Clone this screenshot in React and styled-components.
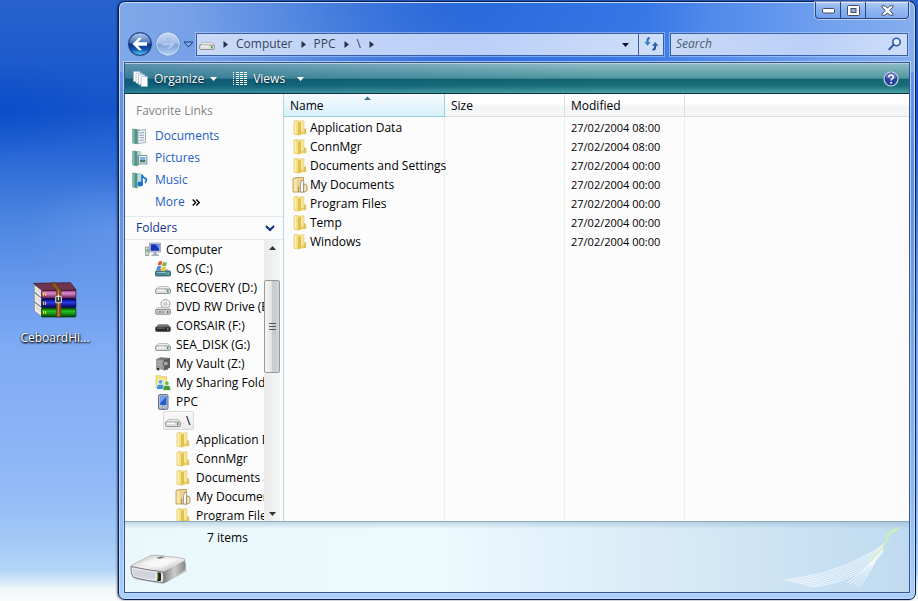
import React from 'react';
import styled, { createGlobalStyle } from 'styled-components';

const GlobalStyle = createGlobalStyle`
  * {
    box-sizing: border-box;
  }
  body {
    margin: 0;
    font-family: 'Open Sans', 'Noto Sans', sans-serif;
    font-size: 12px;
    line-height: 18px;
    color: #000;
  }
  button,
  input {
    font: inherit;
    color: inherit;
    padding: 0;
    border: none;
    background: none;
  }
  a {
    color: inherit;
    text-decoration: none;
  }
  svg {
    display: block;
    flex: none;
  }
`;

/* ---------- desktop ---------- */

const Desktop = styled.div`
  display: flex;
  height: 100vh;
  min-height: 400px;
  padding: 1px 2px 1px 0;
  overflow: hidden;
  background:
    radial-gradient(ellipse 90px 60px at 112px 235px, rgba(120, 165, 240, 0.4), transparent),
    radial-gradient(ellipse 120px 50px at 0 110px, rgba(0, 70, 200, 0.5), transparent),
    linear-gradient(#2863cd 0%, #1f5dcc 8%, #1555cc 18%, #2a69d6 26%, #4a83e0 36%, #6597ea 46%, #7eabf4 58%, #8ab3f7 72%, #93bbf6 82%, #a3c9f6 90%, #b4d6f7 95%, #f0f7fa 98%, #fafcfb 100%);
`;

const IconArea = styled.aside`
  flex: 0 0 118px;
  display: flex;
  align-items: center;
  justify-content: center;
  padding: 28px 8px 0 0;
`;

const Shortcut = styled.button`
  display: flex;
  flex-direction: column;
  align-items: center;
  gap: 11px;
  color: #fff;
  text-shadow: 1px 1px 2px #000, 0 1px 2px #000;
`;

/* ---------- window frame ---------- */

const Window = styled.main`
  flex: 1;
  min-width: 0;
  display: flex;
  flex-direction: column;
  padding: 0 5px 6px;
  border: 1px solid #0b1d4a;
  border-radius: 7px;
  box-shadow: inset 0 0 0 1px #c4dcfb, -1px 0 2px rgba(0, 10, 60, 0.6);
  background:
    radial-gradient(ellipse 260px 90px at 330px 10px, rgba(33, 98, 212, 0.7), transparent),
    linear-gradient(90deg, #80a8ea 0%, #6b98e5 20%, #3a77e4 45%, #3a7bea 65%, #6f9fee 88%, #86aeee 100%) top / 100% 70px no-repeat,
    linear-gradient(#6c9be8, #5f8fe3 30%, #8ab6f4 80%, #a9cff9);
`;

const CaptionButtons = styled.div`
  align-self: flex-end;
  display: flex;
  height: 17px;
  margin: 0 1px 13px 0;
  border: 1px solid #2b437e;
  border-top: none;
  border-radius: 0 0 4px 4px;
  box-shadow: 0 0 0 1px rgba(255, 255, 255, 0.5);
`;

const CaptionButton = styled.button`
  display: grid;
  place-items: center;
  width: ${(props) => (props.$wide ? '42px' : '25px')};
  border-right: ${(props) => (props.$wide ? 'none' : '1px solid #2b437e')};
  background: linear-gradient(rgba(255, 255, 255, 0.4), rgba(255, 255, 255, 0.15) 50%, transparent);
`;

const NavBar = styled.nav`
  display: flex;
  align-items: center;
  height: 24px;
  margin: 0 2px 6px 3px;
`;

const NavButtons = styled.div`
  display: flex;
  align-items: center;
  gap: 2px;
  margin-right: 2px;
`;

const NavButton = styled.button`
  display: grid;
  place-items: center;
`;

const Field = styled.div`
  display: flex;
  align-items: center;
  min-width: 0;
  height: 23px;
  border: 1px solid #3b5fa5;
  box-shadow: 0 0 0 1px rgba(190, 215, 255, 0.5);
  background: linear-gradient(90deg, #c9d9f6, #bad0f8 60%, #cedef9);
`;

const AddressBar = styled(Field)`
  flex: 1;
  padding-left: 2px;
  margin-right: 6px;
  color: #36415a;
`;

const Crumbs = styled.div`
  flex: 1;
  min-width: 0;
  display: flex;
  align-items: center;
  gap: 7px;
`;

const AddressButton = styled.button`
  display: grid;
  place-items: center;
  width: 25px;
  height: 21px;
  border-left: ${(props) => (props.$divided ? '1px solid #3b5fa5' : 'none')};
`;

const SearchBox = styled(Field)`
  flex: 0 1 238px;
  padding: 0 5px;
`;

const SearchInput = styled.input`
  flex: 1;
  min-width: 0;
  outline: none;

  &::placeholder {
    color: #4c5c78;
    font-style: italic;
    opacity: 1;
  }
`;

/* ---------- client area ---------- */

const Client = styled.div`
  flex: 1;
  min-height: 0;
  display: flex;
  flex-direction: column;
  border: 1px solid #38548a;
  box-shadow: 0 0 0 1px rgba(200, 222, 252, 0.7);
  background: #fcfcfc;
`;

const CommandBar = styled.div`
  display: flex;
  align-items: center;
  flex: none;
  height: 31px;
  padding: 0 10px 0 8px;
  color: #fff;
  text-shadow: 0 1px 2px #012;
  border-top: 1px solid #b5d4df;
  border-bottom: 1px solid #0b3146;
  background:
    linear-gradient(90deg, rgba(0, 70, 130, 0.35), transparent 60%),
    linear-gradient(#8ebac4 0%, #4f97a0 49%, #14646e 52%, #186f78 75%, #4aa2a2 100%);
`;

const Command = styled.button`
  display: flex;
  align-items: center;
  gap: 6px;
  margin-right: ${(props) => (props.$split ? '12px' : '16px')};
  text-shadow: inherit;
`;

const HelpButton = styled.button`
  margin-left: auto;
`;

const Panes = styled.div`
  flex: 1;
  min-height: 0;
  display: flex;
`;

const Sidebar = styled.aside`
  flex: 0 0 159px;
  min-width: 0;
  display: flex;
  flex-direction: column;
  border-right: 1px solid #b5d8e8;
`;

const Favorites = styled.section`
  padding: 8px 7px 3px;
`;

const FavoritesTitle = styled.h2`
  margin: 0 0 5px 4px;
  font-size: 12px;
  font-weight: 400;
  color: #868686;
`;

const FavoriteLink = styled.a`
  display: flex;
  align-items: center;
  height: 22px;
  gap: 7px;
  padding-left: ${(props) => (props.$plain ? '23px' : '0')};
  color: #1f5cc4;
`;

const FoldersToggle = styled.button`
  display: flex;
  align-items: center;
  justify-content: space-between;
  flex: none;
  height: 24px;
  padding: 0 8px 0 11px;
  border-top: 1px solid #e2e8ee;
  border-bottom: 1px solid #e2e8ee;
  color: #15328b;
`;

const TreeArea = styled.div`
  flex: 1;
  min-height: 0;
  display: flex;
  padding-right: 3px;
`;

const Tree = styled.ul`
  flex: 1;
  min-width: 0;
  margin: 0;
  padding: 0;
  overflow: hidden;
  list-style: none;
`;

const TreeItem = styled.li`
  display: flex;
  height: 19px;
  padding-left: ${(props) => props.$level * 10 + 20}px;
`;

const TreeButton = styled.button`
  flex: none;
  display: flex;
  align-items: center;
  gap: 5px;
  margin-left: ${(props) => (props.$selected ? '-2px' : '0')};
  padding: ${(props) => (props.$selected ? '0 3px 0 1px' : '0')};
  border: ${(props) => (props.$selected ? '1px solid #d9d9d9' : 'none')};
  border-radius: 2px;
  background: ${(props) => (props.$selected ? 'linear-gradient(#fafafa, #eaeaea)' : 'none')};
  white-space: nowrap;
`;

const ScrollBar = styled.div`
  flex: 0 0 16px;
  display: flex;
  flex-direction: column;
  background: linear-gradient(90deg, #eaeaea, #f6f6f6);
`;

const ScrollButton = styled.button`
  display: grid;
  place-items: center;
  height: 16px;
`;

const ScrollTrack = styled.div`
  flex: 1;
  display: flex;
  flex-direction: column;

  &::before {
    content: '';
    flex: 24;
  }
  &::after {
    content: '';
    flex: 134;
  }
`;

const ScrollThumb = styled.div`
  flex: 93;
  display: grid;
  place-items: center;
  border: 1px solid #979797;
  border-radius: 2px;
  background: linear-gradient(90deg, #f5f5f5, #e6e6e6 45%, #c8c8ca 55%, #d4d4d6);
`;

const FileList = styled.div`
  flex: 1;
  min-width: 0;
  overflow: hidden;
`;

const FileTable = styled.table`
  width: 100%;
  height: 100%;
  table-layout: fixed;
  border-collapse: separate;
  border-spacing: 0;
`;

const HeadCell = styled.th`
  width: ${(props) => props.$width};
  height: 23px;
  padding: 1px 6px 0;
  text-align: left;
  font-weight: 400;
  border-right: ${(props) => (props.$last ? 'none' : '1px solid')};
  border-bottom: 1px solid;
  border-color: ${(props) => (props.$sorted ? '#96d2ea' : '#dcdddf')};
  background: ${(props) =>
    props.$sorted
      ? 'linear-gradient(#f5fbfe 0%, #e9f7fd 45%, #d8f0fa 100%)'
      : 'linear-gradient(#ffffff 40%, #f3f4f5 60%, #f5f6f7)'};
`;

const HeadLabel = styled.button`
  position: relative;
  width: 100%;
  text-align: left;
`;

const SortMark = styled.svg`
  position: absolute;
  top: -1px;
  left: 50%;
`;

const Cell = styled.td`
  height: 19px;
  padding: 0 6px;
  white-space: nowrap;
  border-right: ${(props) => (props.$last ? 'none' : '1px solid #eff1f3')};
`;

const DateCell = styled(Cell)`
  font-size: 11px;
`;

const SpacerRow = styled.tr`
  height: 1px;

  td {
    height: 1px;
  }
`;

const FillerRow = styled.tr`
  height: 100%;
`;

const FileName = styled.div`
  display: flex;
  align-items: center;
  gap: 2px;
  margin: 0 -6px 0 2px;
`;

const DetailsPane = styled.footer`
  position: relative;
  flex: none;
  display: flex;
  align-items: flex-start;
  gap: 18px;
  height: 71px;
  padding: 7px 4px;
  border-top: 1px solid #8fabc0;
  background:
    linear-gradient(rgba(140, 175, 200, 0.45), transparent 7px),
    linear-gradient(90deg, #eaf8fc 0%, #edfafe 40%, #d9ebf7 68%, #bfdaf0 100%);
`;

const DriveArt = styled.div`
  align-self: flex-end;
`;

const Swoosh = styled.svg`
  position: absolute;
  right: 4px;
  bottom: 1px;
`;

/* ---------- icons ---------- */

const FolderIcon = () => (
  <svg width="16" height="16" viewBox="0 0 16 16">
    <path d="M2 1l4-.6 1 1.2V15l-5-.8z" fill="#f4e08a" stroke="#d9bb55" strokeWidth=".6" />
    <path d="M6.500 1.500l5.500.5v12l-5.500 1.200z" fill="#ecd061" />
    <path d="M8 .8h4V12H8z" fill="#f6e79d" stroke="#dbc063" strokeWidth=".5" />
    <path d="M6 3l3-1v12l-3 1.500z" fill="#e2c14b" />
    <path d="M12 8.500h2l.4 5L12 14.500z" fill="#dfc35c" />
    <path d="M3.200 1.500v12" stroke="#fff7c9" strokeWidth="1" />
  </svg>
);

const DocFolderIcon = () => (
  <svg width="16" height="16" viewBox="0 0 16 16">
    <path d="M1 1.500L5 .5h6.500V15H1z" fill="#ecd28a" stroke="#b6924b" strokeWidth=".8" />
    <path d="M1.800 2h3v12.300h-3z" fill="#f6e4ad" />
    <path d="M8.500 6.500L10 3l1.700 1.500V15H8.500z" fill="#fff" stroke="#8e8a80" strokeWidth=".8" />
    <path d="M11.700 7.500l1.800-.5 1.500 2v4.500L12.500 15h-1z" fill="#f0e4c0" stroke="#9a7f45" strokeWidth=".8" />
    <path d="M6.500 9.500V15" stroke="#b08e48" />
  </svg>
);

const DriveIcon = ({ dark }) => (
  <svg width="16" height="16" viewBox="0 0 16 16">
    <path d="M3.500 6.500h9.500l2.500 3H.7z" fill={dark ? '#777' : '#ececec'} stroke={dark ? '#888' : '#aaa'} strokeWidth=".7" />
    <rect x=".6" y="9" width="14.800" height="4.500" rx="1.200" fill={dark ? '#292929' : '#dedede'} stroke={dark ? '#555' : '#808080'} strokeWidth=".8" />
    <path d="M2 10.200h8" stroke={dark ? '#666' : '#fff'} strokeWidth="1.200" />
    <rect x="12" y="10" width="1.500" height="2.300" fill={dark ? '#777' : '#3d9a3c'} />
  </svg>
);

const OsDriveIcon = () => (
  <svg width="16" height="17" viewBox="0 0 16 17">
    <path d="M2 9h10l3.500 2.500H.5z" fill="#a9c0c4" />
    <rect x=".5" y="11" width="15" height="5" rx="1" fill="#4c8596" stroke="#2c5967" strokeWidth=".8" />
    <path d="M2 12.500h9" stroke="#8dc0cc" />
    <rect x="12.500" y="12.500" width="1.300" height="2" fill="#6bea6b" />
    <path d="M3.500 2q2-1.800 3.700-.5L6.400 5.200Q4.500 4.500 2.600 5.600z" fill="#e8582c" />
    <path d="M8 1.800q2 1.300 4 .2l-.9 3.900q-2 1-4-.2z" fill="#7cb843" />
    <path d="M2.400 6.400q2-1.200 3.800-.2l-.9 3.900q-2-1-3.900.2z" fill="#3f8ede" />
    <path d="M7 6.600q2 1.200 4 .2l-1 3.900q-2 1-3.900-.2z" fill="#f5c62e" />
  </svg>
);

const DvdIcon = () => (
  <svg width="16" height="16" viewBox="0 0 16 16">
    <circle cx="10.500" cy="5" r="4.500" fill="#ececec" stroke="#8f8f8f" strokeWidth=".8" />
    <path d="M10.500 5L8 1.500M10.500 5L14 3" stroke="#fff" />
    <circle cx="10.500" cy="5" r="1.300" fill="#fff" stroke="#888" strokeWidth=".7" />
    <path d="M3 8.500h10l2.500 2.500H.5z" fill="#e3e3e3" stroke="#999" strokeWidth=".5" />
    <rect x=".6" y="10.700" width="14.800" height="4.500" rx="1" fill="#d5d5d5" stroke="#707070" strokeWidth=".8" />
    <path d="M2.500 13h7" stroke="#777" />
    <rect x="12" y="12" width="1.500" height="2" fill="#3a7d3a" />
  </svg>
);

const VaultIcon = () => (
  <svg width="16" height="16" viewBox="0 0 16 16">
    <path d="M1 3l5-1.700L15 2v9.500l-5.500 3L1 11.500z" fill="#777" />
    <path d="M1 3l8 1.200V14.500L1 11.500z" fill="#9a9a9a" />
    <path d="M9 4.200L15 2v9.500l-6 3z" fill="#5c5c5c" />
    <circle cx="10.800" cy="7.500" r="2.500" fill="#a9a9a9" stroke="#444" strokeWidth=".8" />
    <path d="M2 5.500l5 .8M2 8.500l5 .9" stroke="#c0c0c0" strokeWidth=".8" />
    <path d="M2 12v1.500l2 .5v-1.500M12 14v-1" stroke="#333" />
  </svg>
);

const SharingIcon = () => (
  <svg width="16" height="16" viewBox="0 0 16 16">
    <path d="M1 .8h5l1 1h4.500V13H1z" fill="#f6e38a" stroke="#d8b94e" strokeWidth=".7" />
    <path d="M1.500 14.500q-.5-5.500 4-5.500t4 5.500z" fill="#3f8ed6" stroke="#fff" strokeWidth=".7" />
    <circle cx="5.500" cy="6.800" r="2.400" fill="#5ba4e4" stroke="#fff" strokeWidth=".7" />
    <path d="M8 15.500q-.5-5.500 3.800-5.500t3.800 5.500z" fill="#3f9c38" stroke="#fff" strokeWidth=".7" />
    <circle cx="11.800" cy="8.200" r="2.300" fill="#68b94e" stroke="#fff" strokeWidth=".7" />
  </svg>
);

const PhoneIcon = () => (
  <svg width="16" height="16" viewBox="0 0 16 16">
    <rect x="3.500" y=".6" width="9.500" height="14.800" rx="1.500" fill="#b4bfd2" stroke="#55617d" strokeWidth=".9" />
    <rect x="5.200" y="2.500" width="6.200" height="8.500" fill="#245dce" />
    <path d="M5.200 2.500h6.200L5.200 9z" fill="#79a7f0" />
    <circle cx="8.300" cy="13.200" r="1.100" fill="#eef2fa" stroke="#55617d" strokeWidth=".5" />
  </svg>
);

const ComputerIcon = () => (
  <svg width="16" height="16" viewBox="0 0 16 16">
    <rect x=".6" y="5" width="3.200" height="8.500" fill="#d6dbd8" stroke="#7c8a86" strokeWidth=".7" />
    <path d="M2.200 7v3" stroke="#3ba345" />
    <rect x="4.500" y="1" width="11" height="9" fill="#cdd5e8" stroke="#8c96ae" strokeWidth=".7" />
    <rect x="5.700" y="2.200" width="8.600" height="6.600" fill="#1733b4" />
    <path d="M10 2.200h4.300v5z" fill="#5d8bf1" />
    <path d="M8.500 10h3l.5 2.500H14V14H6.500v-1.500h1.700z" fill="#a4adba" />
  </svg>
);

const FavoriteIcon = ({ kind }) => (
  <svg width="16" height="17" viewBox="0 0 16 17">
    <path d="M.8 1l4.700.8v14L.8 15z" fill="#4f9487" stroke="#38756b" strokeWidth=".6" />
    <path d="M1.800 1.300v13.800" stroke="#9bd0c2" />
    <path d="M5.500 1.800L8 1v13l-2.500 1.800z" fill="#86bcae" />
    {kind === 'documents' && (
      <>
        <path d="M6 2.500L13.500 1.500v13L6 15.500z" fill="#eef4fa" stroke="#8899a9" strokeWidth=".8" />
        <path d="M7.500 5l4.500-.5M7.500 7.500l4.500-.5M7.500 10l4.500-.5M7.500 12.500l4.500-.5" stroke="#8296ae" strokeWidth=".9" />
      </>
    )}
    {kind === 'pictures' && (
      <>
        <path d="M5.500 2l4-.7v5h-4z" fill="#b9dacf" />
        <rect x="6.500" y="5.500" width="8.300" height="8.500" fill="#f4f8fb" stroke="#6f8895" strokeWidth=".9" />
        <path d="M7.800 7h5.700v3H7.800z" fill="#7db4dc" />
        <path d="M7.800 10h5.700v2.500H7.800z" fill="#477f70" />
      </>
    )}
    {kind === 'music' && (
      <>
        <path d="M5.500 2l4.500-.5v12l-4.500 2z" fill="#bddcd2" />
        <path d="M10 2.500v9M10 2.500q.5 3 4.500 4.500-.2 2.500-1.500 4" stroke="#1872cf" strokeWidth="1.600" fill="none" />
        <ellipse cx="8.300" cy="12" rx="2.800" ry="2.400" fill="#1872cf" />
      </>
    )}
  </svg>
);

const Triangle = ({ dir, color = '#000', size = 7 }) => (
  <svg width={size} height={size} viewBox="0 0 7 7">
    {dir === 'right' && <path d="M1.500 0L6 3.500 1.500 7z" fill={color} />}
    {dir === 'down' && <path d="M0 2h7L3.500 6z" fill={color} />}
    {dir === 'up' && <path d="M0 5h7L3.500 1z" fill={color} />}
  </svg>
);

const BackIcon = () => (
  <svg width="26" height="26" viewBox="0 0 26 26">
    <defs>
      <linearGradient id="back" x1="0" y1="0" x2="0" y2="1">
        <stop offset="0" stopColor="#b4cbee" />
        <stop offset=".46" stopColor="#4a74b8" />
        <stop offset=".5" stopColor="#0a2f80" />
        <stop offset=".75" stopColor="#1358b4" />
        <stop offset="1" stopColor="#5ce0f8" />
      </linearGradient>
    </defs>
    <circle cx="13" cy="13" r="12.300" fill="#466fb8" opacity=".7" />
    <circle cx="13" cy="13" r="11.300" fill="url(#back)" stroke="#1a3470" strokeWidth="1" />
    <path d="M5.500 13l6.500-6.200h3L11 11.200h9v3.600h-9l4 4.400h-3z" fill="#fff" />
  </svg>
);

const ForwardIcon = () => (
  <svg width="26" height="26" viewBox="0 0 26 26">
    <defs>
      <linearGradient id="forward" x1="0" y1="0" x2="0" y2="1">
        <stop offset="0" stopColor="#c6d8f3" />
        <stop offset=".48" stopColor="#a5bfe8" />
        <stop offset=".52" stopColor="#7d9fd8" />
        <stop offset="1" stopColor="#b7d2f6" />
      </linearGradient>
    </defs>
    <circle cx="13" cy="13" r="12.300" fill="#5c82c4" opacity=".7" />
    <circle cx="13" cy="13" r="11.300" fill="url(#forward)" stroke="#e0ecfc" strokeWidth=".8" />
    <path d="M20 13l-6-5.500h-2.500l3.500 4H7v3h8l-3.500 4H14z" fill="#b3caee" stroke="#8eacdc" strokeWidth=".6" />
  </svg>
);

const RefreshIcon = () => (
  <svg width="15" height="14" viewBox="0 0 15 14">
    <path d="M5.800 1Q3.500 1 3.500 4v2" fill="none" stroke="#2f6fb5" strokeWidth="2" />
    <path d="M.3 5h6.400L3.500 8.800z" fill="#3d82c9" />
    <path d="M8.500 12.800q2.700 0 2.700-3V8" fill="none" stroke="#244f96" strokeWidth="2" />
    <path d="M8 8.700h6.400L11.200 5z" fill="#2c61a8" />
  </svg>
);

const SearchIcon = () => (
  <svg width="14" height="14" viewBox="0 0 14 14">
    <circle cx="8.500" cy="5" r="3.700" fill="#e2eefe" stroke="#2d5ca8" strokeWidth="1.600" />
    <path d="M5.600 7.800L1.300 12.300" stroke="#2d5ca8" strokeWidth="2" strokeLinecap="round" />
  </svg>
);

const OrganizeIcon = () => (
  <svg width="15" height="16" viewBox="0 0 15 16">
    <path d="M.5.500h6.500v10H.5z" fill="#fff" stroke="#9fb4c4" strokeWidth=".7" />
    <path d="M3 2.200h6.500v10H3z" fill="#fff" stroke="#9fb4c4" strokeWidth=".7" />
    <path d="M5.500 3.800H12v10H5.500z" fill="#fff" stroke="#9fb4c4" strokeWidth=".7" />
    <path d="M8 5.500h6.500v10H8z" fill="#fff" stroke="#9fb4c4" strokeWidth=".7" />
  </svg>
);

const ViewsIcon = () => (
  <svg width="14" height="14" viewBox="0 0 14 14" shapeRendering="crispEdges">
    <path d="M0 .5h2M0 2.500h2M0 4.500h2M0 6.500h2M0 8.500h2M0 10.500h2M0 12.500h2" stroke="#fff" strokeDasharray="1 1" />
    <path d="M3 .5h3M7 .5h3M11 .5h3M3 2.500h3M7 2.500h3M11 2.500h3M3 4.500h3M7 4.500h3M11 4.500h3M3 6.500h3M7 6.500h3M11 6.500h3M3 8.500h3M7 8.500h3M11 8.500h3M3 10.500h3M7 10.500h3M11 10.500h3M3 12.500h3M7 12.500h3M11 12.500h3" stroke="#fff" />
  </svg>
);

const HelpIcon = () => (
  <svg width="16" height="16" viewBox="0 0 16 16">
    <circle cx="8" cy="8" r="7" fill="#253f9c" stroke="#c9d3ee" strokeWidth="1.200" />
    <path d="M2.500 7a5.500 5.500 0 0 1 11 0q-5 2-11 0z" fill="#7d92d4" opacity=".6" />
    <path d="M5.700 6.200Q5.800 4 8.100 4t2.300 2q0 1.200-1.300 1.900-1 .5-1 1.700" fill="none" stroke="#fff" strokeWidth="1.600" />
    <circle cx="8.100" cy="11.800" r="1" fill="#fff" />
  </svg>
);

const ArchiveIcon = () => (
  <svg width="44" height="36" viewBox="104 70 130 107">
    <defs>
      <linearGradient id="pink" x1="0" y1="0" x2="0" y2="1">
        <stop offset="0" stopColor="#8e3876" />
        <stop offset=".35" stopColor="#e08bd0" />
        <stop offset="1" stopColor="#5d1448" />
      </linearGradient>
      <linearGradient id="blue" x1="0" y1="0" x2="0" y2="1">
        <stop offset="0" stopColor="#000070" />
        <stop offset=".4" stopColor="#2a3be8" />
        <stop offset="1" stopColor="#000058" />
      </linearGradient>
      <linearGradient id="green" x1="0" y1="0" x2="0" y2="1">
        <stop offset="0" stopColor="#005500" />
        <stop offset=".4" stopColor="#25c225" />
        <stop offset="1" stopColor="#004600" />
      </linearGradient>
    </defs>
    <path d="M105 74l110-2 17 22-102 2z" fill="#71344f" stroke="#3a1425" strokeWidth="2" />
    <path d="M107 78l23 18v22l-22-19zM107 102l23 18v25l-22-17zM107 130l23 17v27l-22-18z" fill="#f4f2ea" stroke="#777" strokeWidth="2" />
    <path d="M111 87l18 15M111 93l18 15M111 113l18 15M111 119l18 15M111 140l18 15M111 146l18 15" stroke="#aaa" strokeWidth="1.500" />
    <rect x="129" y="95" width="102" height="24" rx="3" fill="url(#pink)" stroke="#30091f" strokeWidth="2" />
    <rect x="129" y="120" width="102" height="26" rx="3" fill="url(#blue)" stroke="#00002d" strokeWidth="2" />
    <rect x="129" y="147" width="102" height="27" rx="3" fill="url(#green)" stroke="#002600" strokeWidth="2" />
    <path d="M135 101v10M141 101v10M135 128v10M141 128v10M135 155v10M141 155v10" stroke="#f3d23c" strokeWidth="3" />
    <path d="M157 73l12-1 18 22v80h-14V95z" fill="#8a5520" stroke="#4d2c0a" strokeWidth="1.500" />
    <path d="M179 96v76" stroke="#c98e4a" strokeWidth="3" />
    <rect x="171" y="112" width="17" height="20" rx="4" fill="#3a3a3a" stroke="#e4e4e4" strokeWidth="3" />
    <path d="M179 108v16" stroke="#eee" strokeWidth="3" />
  </svg>
);

const BigDriveIcon = () => (
  <svg width="60" height="32" viewBox="0 0 60 32">
    <defs>
      <linearGradient id="lid" x1="0" y1="0" x2="1" y2="1">
        <stop offset="0" stopColor="#c9c9c9" />
        <stop offset=".5" stopColor="#f4f4f4" />
        <stop offset="1" stopColor="#b0b0b0" />
      </linearGradient>
      <linearGradient id="side" x1="0" y1="0" x2="1" y2="0">
        <stop offset="0" stopColor="#7f7f7f" />
        <stop offset=".5" stopColor="#cdcdcd" />
        <stop offset="1" stopColor="#858585" />
      </linearGradient>
    </defs>
    <path d="M4 26l30 5 24-13-3-4z" fill="#000" opacity=".2" />
    <path d="M2 14Q2 12 5 11L21 3q2-1 5-.8L53 5q4 .6 3 3L35 20 3 15z" fill="url(#lid)" stroke="#999" strokeWidth=".6" />
    <path d="M34 19L56 7.500q1.500 5 .5 9L38 29q-2 1-4 .5z" fill="url(#side)" />
    <path d="M2 13.500q14 3 32 5.500 1.500 5 .5 10.500Q17 28 4 24 1.500 20 2 13.500z" fill="#e4e5e9" stroke="#6e6e6e" strokeWidth=".9" />
    <path d="M4 16q11 2.500 22 3.800v6.200Q14 25 5 22.500z" fill="#d0d3de" />
    <path d="M12 11l13-6 23 2-15 8z" fill="#fff" opacity=".5" />
    <path d="M27 5l5-1.600 4 .5-5 1.800z" fill="#777" />
    <rect x="28" y="19.500" width="4" height="8.500" rx="1" fill="#1d2518" />
    <path d="M28.700 20.500v6" stroke="#8fd04c" strokeWidth="1" />
  </svg>
);

const SwooshArt = () => (
  <Swoosh width="130" height="68" viewBox="0 0 130 68" fill="none">
    {[0, 1, 2, 3, 4, 5, 6, 7].map((i) => (
      <path key={i} d={`M${8 + i * 4} ${57 + i} Q${66 + i * 3} ${51 + i} 108 ${22 + i}`} stroke="#fff" strokeWidth=".9" opacity=".75" />
    ))}
    {[0, 1, 2, 3, 4].map((i) => (
      <path key={i} d={`M${72 + i * 3} ${60 + i} Q${94 + i} 46 109 20`} stroke="#fff" opacity=".8" />
    ))}
    <path d="M96 38Q108 26 116 8" stroke="#d4efb8" strokeWidth="2" opacity=".8" />
    <path d="M109 15q7-10 16-11-6 6-9 6-2 3-7 5z" fill="#cdf0b4" />
  </Swoosh>
);

/* ---------- data ---------- */

const favorites = [
  { kind: 'documents', label: 'Documents' },
  { kind: 'pictures', label: 'Pictures' },
  { kind: 'music', label: 'Music' },
];

const tree = [
  { level: 0, icon: <ComputerIcon />, label: 'Computer' },
  { level: 1, icon: <OsDriveIcon />, label: 'OS (C:)' },
  { level: 1, icon: <DriveIcon />, label: 'RECOVERY (D:)' },
  { level: 1, icon: <DvdIcon />, label: 'DVD RW Drive (E:)' },
  { level: 1, icon: <DriveIcon dark />, label: 'CORSAIR (F:)' },
  { level: 1, icon: <DriveIcon />, label: 'SEA_DISK (G:)' },
  { level: 1, icon: <VaultIcon />, label: 'My Vault (Z:)' },
  { level: 1, icon: <SharingIcon />, label: 'My Sharing Folders' },
  { level: 1, icon: <PhoneIcon />, label: 'PPC' },
  { level: 2, icon: <DriveIcon />, label: '\\', selected: true },
  { level: 3, icon: <FolderIcon />, label: 'Application Data' },
  { level: 3, icon: <FolderIcon />, label: 'ConnMgr' },
  { level: 3, icon: <FolderIcon />, label: 'Documents and Settings' },
  { level: 3, icon: <DocFolderIcon />, label: 'My Documents' },
  { level: 3, icon: <FolderIcon />, label: 'Program Files' },
];

const files = [
  { name: 'Application Data', modified: '27/02/2004 08:00' },
  { name: 'ConnMgr', modified: '27/02/2004 08:00' },
  { name: 'Documents and Settings', modified: '27/02/2004 00:00' },
  { name: 'My Documents', modified: '27/02/2004 00:00', doc: true },
  { name: 'Program Files', modified: '27/02/2004 00:00' },
  { name: 'Temp', modified: '27/02/2004 00:00' },
  { name: 'Windows', modified: '27/02/2004 00:00' },
];

const crumbs = ['Computer', 'PPC', '\\'];

/* ---------- parts ---------- */

const TitleBar = () => (
  <CaptionButtons>
    <CaptionButton aria-label="Minimize">
      <svg width="13" height="7" viewBox="0 0 13 7">
        <rect x=".5" y="1.500" width="12" height="4.500" rx="1" fill="#fff" stroke="#454d63" />
      </svg>
    </CaptionButton>
    <CaptionButton aria-label="Maximize">
      <svg width="13" height="11" viewBox="0 0 13 11">
        <rect x=".5" y=".5" width="12" height="10" rx="1" fill="#fff" stroke="#454d63" />
        <rect x="4" y="3.500" width="5" height="4" fill="#8caae0" stroke="#454d63" />
      </svg>
    </CaptionButton>
    <CaptionButton $wide aria-label="Close">
      <svg width="13" height="11" viewBox="0 0 13 11">
        <path d="M.8.8h3.400l2.300 2.400L8.800.8h3.400v1L8.700 5.500l3.500 3.700v1H8.800L6.500 7.800l-2.300 2.400H.8v-1l3.500-3.700L.8 1.800z" fill="#fff" stroke="#454d63" />
      </svg>
    </CaptionButton>
  </CaptionButtons>
);

const Navigation = () => (
  <NavBar>
    <NavButtons>
      <NavButton aria-label="Back">
        <BackIcon />
      </NavButton>
      <NavButton aria-label="Forward">
        <ForwardIcon />
      </NavButton>
      <NavButton aria-label="Recent pages">
        <svg width="11" height="7" viewBox="0 0 11 7">
          <path d="M1 1h9L5.500 6z" fill="#7fa8ea" stroke="#1d3c80" />
        </svg>
      </NavButton>
    </NavButtons>
    <AddressBar>
      <Crumbs>
        <DriveIcon />
        <Triangle dir="right" color="#28304a" />
        {crumbs.map((crumb) => (
          <React.Fragment key={crumb}>
            <a href="#">{crumb}</a>
            <Triangle dir="right" color="#28304a" />
          </React.Fragment>
        ))}
      </Crumbs>
      <AddressButton aria-label="Previous locations">
        <Triangle dir="down" color="#0a1230" />
      </AddressButton>
      <AddressButton $divided aria-label="Refresh">
        <RefreshIcon />
      </AddressButton>
    </AddressBar>
    <SearchBox>
      <SearchInput type="text" placeholder="Search" aria-label="Search" />
      <SearchIcon />
    </SearchBox>
  </NavBar>
);

const NavigationPane = () => (
  <Sidebar>
    <Favorites>
      <FavoritesTitle>Favorite Links</FavoritesTitle>
      {favorites.map((item) => (
        <FavoriteLink href="#" key={item.kind}>
          <FavoriteIcon kind={item.kind} />
          {item.label}
        </FavoriteLink>
      ))}
      <FavoriteLink href="#" $plain>
        More
        <svg width="8" height="7" viewBox="0 0 8 7">
          <path d="M.7.5l3 3-3 3M4.300.5l3 3-3 3" fill="none" stroke="#000" strokeWidth="1.400" />
        </svg>
      </FavoriteLink>
    </Favorites>
    <FoldersToggle>
      Folders
      <svg width="10" height="7" viewBox="0 0 10 7">
        <path d="M1 1l4 4 4-4" fill="none" stroke="#10307c" strokeWidth="2" />
      </svg>
    </FoldersToggle>
    <TreeArea>
      <Tree>
        {tree.map((node) => (
          <TreeItem key={node.label} $level={node.level}>
            <TreeButton $selected={node.selected}>
              {node.icon}
              {node.label}
            </TreeButton>
          </TreeItem>
        ))}
      </Tree>
      <ScrollBar>
        <ScrollButton aria-label="Scroll up">
          <Triangle dir="up" color="#333" />
        </ScrollButton>
        <ScrollTrack>
          <ScrollThumb>
            <svg width="7" height="8" viewBox="0 0 7 8">
              <path d="M0 1.500h7M0 4.500h7M0 7.500h7" stroke="#555" />
            </svg>
          </ScrollThumb>
        </ScrollTrack>
        <ScrollButton aria-label="Scroll down">
          <Triangle dir="down" color="#333" />
        </ScrollButton>
      </ScrollBar>
    </TreeArea>
  </Sidebar>
);

const Files = () => (
  <FileList>
    <FileTable>
      <thead>
        <tr>
          <HeadCell $width="161px" $sorted>
            <HeadLabel>
              Name
              <SortMark width="7" height="4" viewBox="0 0 7 4">
                <path d="M0 4h7L3.500.5z" fill="#3f7393" />
              </SortMark>
            </HeadLabel>
          </HeadCell>
          <HeadCell $width="120px">
            <HeadLabel>Size</HeadLabel>
          </HeadCell>
          <HeadCell $width="120px">
            <HeadLabel>Modified</HeadLabel>
          </HeadCell>
          <HeadCell $last />
        </tr>
      </thead>
      <tbody>
        <SpacerRow>
          <Cell />
          <Cell />
          <Cell />
          <Cell $last />
        </SpacerRow>
        {files.map((file) => (
          <tr key={file.name}>
            <Cell>
              <FileName>
                {file.doc ? <DocFolderIcon /> : <FolderIcon />}
                {file.name}
              </FileName>
            </Cell>
            <Cell />
            <DateCell>{file.modified}</DateCell>
            <Cell $last />
          </tr>
        ))}
        <FillerRow>
          <Cell />
          <Cell />
          <Cell />
          <Cell $last />
        </FillerRow>
      </tbody>
    </FileTable>
  </FileList>
);

const App = () => {
  return (
    <>
      <GlobalStyle />
      <Desktop>
        <IconArea>
          <Shortcut>
            <ArchiveIcon />
            CeboardHi...
          </Shortcut>
        </IconArea>
        <Window>
          <TitleBar />
          <Navigation />
          <Client>
            <CommandBar>
              <Command>
                <OrganizeIcon />
                Organize
                <Triangle dir="down" color="#fff" />
              </Command>
              <Command $split>
                <ViewsIcon />
                Views
              </Command>
              <Command aria-label="More views">
                <Triangle dir="down" color="#fff" />
              </Command>
              <HelpButton aria-label="Help">
                <HelpIcon />
              </HelpButton>
            </CommandBar>
            <Panes>
              <NavigationPane />
              <Files />
            </Panes>
            <DetailsPane>
              <DriveArt>
                <BigDriveIcon />
              </DriveArt>
              <span>7 items</span>
              <SwooshArt />
            </DetailsPane>
          </Client>
        </Window>
      </Desktop>
    </>
  );
};

export default App;
